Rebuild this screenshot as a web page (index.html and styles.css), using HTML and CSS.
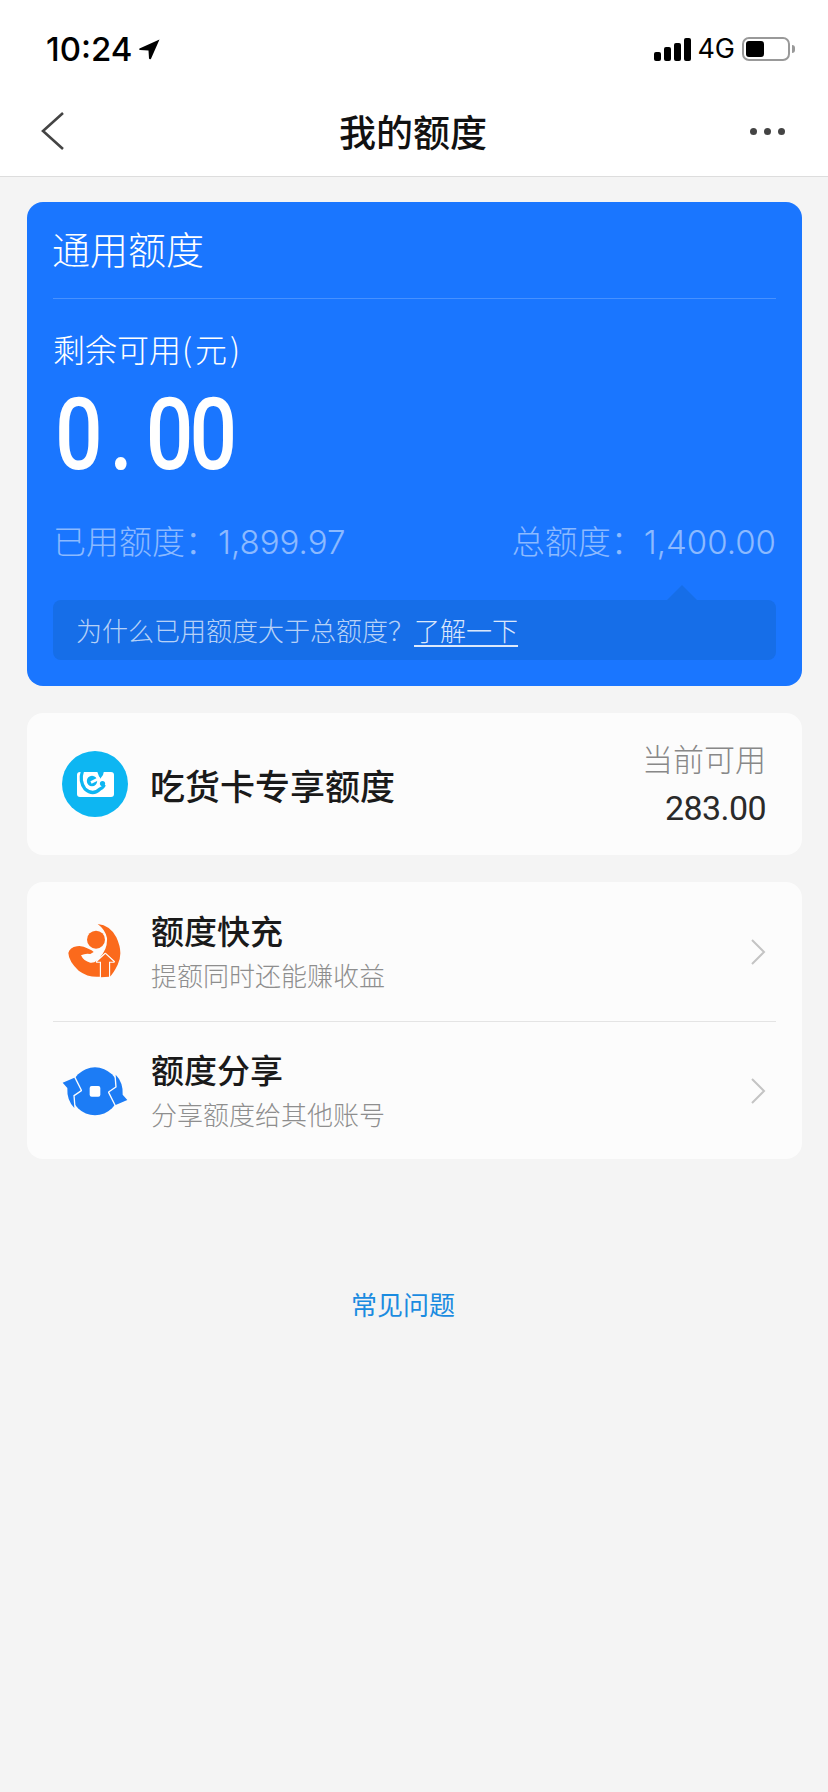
FILE: index.html
```html
<!DOCTYPE html>
<html lang="zh-CN">
<head>
<meta charset="utf-8">
<title>我的额度</title>
<link rel="stylesheet" href="styles.css">
</head>
<body>
<header class="top">
  <div class="status">
    <div class="status-left">
      <span class="time">10:24</span>
      <svg class="loc" viewBox="0 0 21 21"><path d="M20.5 0.5 L0.5 9.5 Q-0.3 10.500 1 11 L9.500 11.500 L10 19.500 Q10.800 21 12 19.800 Z" fill="#000"/></svg>
    </div>
    <div class="status-right">
      <div class="bars"><i class="b1"></i><i class="b2"></i><i class="b3"></i><i class="b4"></i></div>
      <span class="net">4G</span>
      <div class="battery"><div class="battery-fill"></div></div>
      <div class="battery-nub"></div>
    </div>
  </div>
  <nav class="nav">
    <svg class="back" viewBox="0 0 24 40"><path d="M22 2 L2 20 L22 38" fill="none" stroke="#444" stroke-width="2.6"/></svg>
    <h1 class="title">我的额度</h1>
    <div class="dots"><i></i><i></i><i></i></div>
  </nav>
</header>
<main class="main">
  <section class="quota">
    <div class="quota-head">通用额度</div>
    <div class="quota-label">剩余可用<span class="unit">(元)</span></div>
    <div class="quota-num">0<span class="point">.</span>00</div>
    <div class="quota-row">
      <span>已用额度：<span class="n">1,899.97</span></span>
      <span>总额度：<span class="n">1,400.00</span></span>
    </div>
    <div class="hint">
      为什么已用额度大于总额度？<a class="hint-link">了解一下</a>
    </div>
  </section>
  <section class="panel food">
    <svg class="food-icon" viewBox="0 0 66 66" width="66" height="66">
      <circle cx="33" cy="33" r="33" fill="#0db6f2"/>
      <rect x="15" y="21" width="37" height="25" rx="3" fill="#fff"/>
      <path d="M20.500 20 Q17 30 23 38 Q31 45 38 38 Q42 36 42 34" fill="none" stroke="#0db6f2" stroke-width="3.200"/>
      <path d="M35 20 L42 20 L41 24 L38 28 Z" fill="#0db6f2"/>
      <circle cx="30" cy="30" r="5.200" fill="#0db6f2"/>
      <path d="M29 31.500 L38 27" fill="none" stroke="#fff" stroke-width="2.600"/>
      <circle cx="40.500" cy="32.500" r="2.600" fill="#0db6f2"/>
    </svg>
    <div class="food-name">吃货卡专享额度</div>
    <div class="food-side">
      <div class="food-cap">当前可用</div>
      <div class="food-val">283.00</div>
    </div>
  </section>
  <section class="panel list">
    <div class="item">
      <div class="slot">
        <svg class="orange" viewBox="20 15 165 165" width="55" height="55">
          <path d="M24 105 Q28 88 50 85 Q65 82 84 92 Q98 98 100 102 L90 108 Q75 105 62 112 Q70 130 90 134 Q103 135 108 128 L120 132 L120 176 Q85 180 55 158 Q25 130 24 105 Z" fill="#fb6a1c"/>
          <circle cx="107" cy="65" r="27" fill="#fb6a1c"/>
          <path d="M112 18 Q150 22 168 58 Q190 105 172 140 Q160 165 147 178 L147 132 L164 131 L135 104 L118 118 Q142 95 140 60 Q135 35 112 18 Z" fill="#fb6a1c"/>
          <path class="outlined" d="M135 108 L160 131 L146 131 L146 176 L122 178 L122 131 L110 131 Z" fill="#fb6a1c" stroke="#fcfcfc" stroke-width="7" stroke-linejoin="round"/>
        </svg>
      </div>
      <div class="item-text">
        <div class="item-title">额度快充</div>
        <div class="item-sub">提额同时还能赚收益</div>
      </div>
      <svg class="chev" viewBox="0 0 16 28"><path d="M2 2 L14 14 L2 26" fill="none" stroke="#c4c4c4" stroke-width="2"/></svg>
    </div>
    <div class="item">
      <div class="slot">
        <svg class="blue" viewBox="66 85 198 147" width="66" height="49">
          <circle cx="165" cy="158" r="72" fill="#1c7cf5"/>
          <path class="outlined" d="M68 132 L103 117 L122 155 L100 170 L103 208 Q80 185 82 148 Z" fill="#1c7cf5" stroke="#fcfcfc" stroke-width="8" stroke-linejoin="round"/>
          <path class="outlined" d="M262 184 L227 199 L208 161 L230 146 L227 108 Q250 131 248 168 Z" fill="#1c7cf5" stroke="#fcfcfc" stroke-width="8" stroke-linejoin="round"/>
          <rect x="149" y="142" width="32" height="32" rx="6" fill="#fff"/>
        </svg>
      </div>
      <div class="item-text">
        <div class="item-title">额度分享</div>
        <div class="item-sub">分享额度给其他账号</div>
      </div>
      <svg class="chev" viewBox="0 0 16 28"><path d="M2 2 L14 14 L2 26" fill="none" stroke="#c4c4c4" stroke-width="2"/></svg>
    </div>
  </section>
  <a class="faq">常见问题</a>
</main>
</body>
</html>
```
FILE: styles.css
```css
* { box-sizing: border-box; }
html, body { margin: 0; padding: 0; }
body {
  width: 828px;
  height: 1792px;
  background: #f4f4f4;
  font-family: "Noto Sans CJK SC", "Noto Sans", sans-serif;
  color: #1a1a1a;
  overflow: hidden;
}
.top { background: #fff; }
.status {
  height: 88px;
  padding: 32px 33px 0 46px;
  display: flex;
  justify-content: space-between;
  align-items: flex-start;
}
.status-left { display: flex; align-items: center; gap: 7px; }
.time {
  font-family: Inter, sans-serif;
  font-size: 33px;
  font-weight: 500;
  line-height: 34px;
  color: #000;
}
.loc { width: 21px; height: 21px; }
.status-right { display: flex; align-items: center; height: 34px; }
.bars { display: flex; align-items: flex-end; gap: 3px; height: 23px; margin-right: 6px; }
.bars i { display: block; width: 7px; background: #000; border-radius: 2px; }
.b1 { height: 9px; }
.b2 { height: 14px; }
.b3 { height: 18px; }
.b4 { height: 23px; }
.net {
  font-family: Inter, sans-serif;
  font-size: 27px;
  line-height: 34px;
  color: #000;
  margin-right: 7px;
}
.battery {
  width: 48px;
  height: 24px;
  border: 2px solid #999;
  border-radius: 7px;
  padding: 2px;
}
.battery-fill { width: 18px; height: 16px; background: #000; border-radius: 3px; }
.battery-nub { width: 3px; height: 8px; background: #999; border-radius: 0 3px 3px 0; margin-left: 2px; }
.nav {
  height: 89px;
  border-bottom: 1px solid #ddd;
  padding: 0 43px 0 41px;
  display: grid;
  grid-template-columns: 1fr auto 1fr;
  align-items: center;
}
.back { width: 24px; height: 40px; margin-top: -2px; }
.title {
  margin: -2px 0 0;
  font-size: 37px;
  font-weight: 500;
  color: #111;
  line-height: 50px;
}
.dots { display: flex; gap: 7px; margin-top: -2px; justify-self: end; }
.dots i { display: block; width: 7px; height: 7px; border-radius: 50%; background: #444; }
.main { padding: 25px 26px 0 27px; }
.quota {
  height: 484px;
  background: #1a76ff;
  border-radius: 16px;
  padding: 0 26px;
  color: #fff;
}
.quota-head {
  height: 97px;
  border-bottom: 1px solid rgba(255,255,255,.2);
  font-size: 38px;
  line-height: 92px;
  font-weight: 300;
  text-indent: -1px;
}
.quota-label {
  margin-top: 26px;
  font-size: 32px;
  line-height: 46px;
  font-weight: 300;
}
.unit { letter-spacing: 3px; margin-left: 1px; }
.quota-num {
  font-family: Roboto, sans-serif;
  font-size: 101px;
  font-weight: 500;
  line-height: 110px;
  letter-spacing: -4.6px;
  margin: 9px 0 0 2px;
  transform: scaleX(.83);
  transform-origin: left;
}
.point { margin: 0 20px 0 13px; }
.quota-row {
  margin-top: 27px;
  display: flex;
  justify-content: space-between;
  font-size: 33px;
  line-height: 46px;
  font-weight: 300;
  color: rgba(255,255,255,.5);
}
.n { font-family: Inter, sans-serif; font-weight: 300; font-size: 33px; }
.hint {
  margin-top: 35px;
  height: 60px;
  position: relative;
  background: #166ee8;
  border-radius: 8px;
  padding-left: 23px;
  font-size: 26px;
  line-height: 60px;
  font-weight: 300;
  color: rgba(255,255,255,.7);
}
.hint::before {
  content: "";
  position: absolute;
  right: 79px;
  top: -15px;
  border-left: 15px solid transparent;
  border-right: 15px solid transparent;
  border-bottom: 15px solid #166ee8;
}
.hint-link { color: rgba(255,255,255,.85); text-decoration: underline; text-underline-offset: 4px; }
.panel { background: #fcfcfc; border-radius: 16px; margin-top: 27px; }
.food {
  height: 142px;
  display: flex;
  align-items: center;
  padding: 0 36px 0 35px;
}
.food-icon { width: 66px; height: 66px; margin-right: 22px; flex: none; }
.food-name { flex: 1; font-size: 35px; font-weight: 500; color: #1a1a1a; }
.food-side { text-align: right; }
.food-cap { font-size: 31px; font-weight: 300; color: #888; line-height: 46px; }
.food-val { font-family: Roboto, sans-serif; font-size: 34px; font-weight: 400; line-height: 50px; color: #2a2a2a; margin-top: 2px; letter-spacing: -.6px; }
.list { height: 277px; padding: 0 26px; }
.item {
  height: 139px;
  display: flex;
  align-items: center;
}
.item + .item { border-top: 1px solid #e4e4e4; height: 138px; }
.slot { width: 98px; flex: none; display: flex; }
.orange { margin-left: 14px; margin-top: -2px; }
.blue { margin-left: 9px; margin-top: 1px; }
.outlined { paint-order: stroke; }
.item-text { flex: 1; }
.item-title { font-size: 33px; font-weight: 500; line-height: 44px; color: #1a1a1a; margin-top: -2px; }
.item-sub { font-size: 26px; font-weight: 300; line-height: 38px; color: #8e8e8e; margin-top: 4px; }
.chev { width: 16px; height: 28px; margin-right: 10px; }
.faq {
  display: block;
  margin-top: 126px;
  padding-left: 324px;
  font-size: 26px;
  line-height: 38px;
  color: #1a8be0;
  font-weight: 400;
}
```
